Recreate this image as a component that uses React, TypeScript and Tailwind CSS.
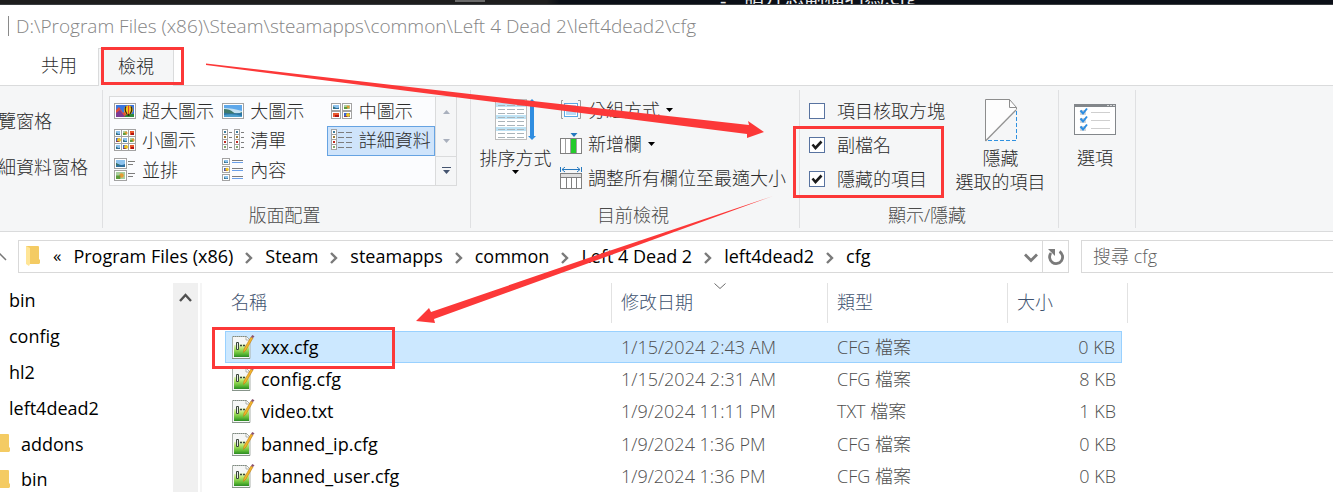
import React, { useState } from 'react';

const Frame = ({ x, y, w, h, tone = 'sky' }: { x: number; y: number; w: number; h: number; tone?: 'sky' | 'red' | 'leaf' | 'balloon' }) => (
  <g>
    <rect x={x + 0.5} y={y + 0.5} width={w - 1} height={h - 1} fill="#fff" stroke="#a3a3a3" />
    {tone === 'sky' && (
      <g>
        <rect x={x + 2} y={y + 2} width={w - 4} height={h - 4} fill="#8ec3ee" />
        <path d={`M${x + 2} ${y + h * 0.45}q${(w - 4) / 2} ${h * 0.3} ${w - 4} ${h * 0.1}V${y + h - 2}H${x + 2}z`} fill="#2f6f9e" />
        <path d={`M${x + 2} ${y + h * 0.45}l${(w - 4) / 2} ${h * 0.2}H${x + 2}z`} fill="#3b7466" />
      </g>
    )}
    {tone === 'red' && (
      <g>
        <rect x={x + 2} y={y + 2} width={w - 4} height={h - 4} fill="#e9572c" />
        <rect x={x + w / 2 - 1} y={y + h / 2} width={w / 2 - 1} height={h / 2 - 2} fill="#b31412" />
      </g>
    )}
    {tone === 'leaf' && (
      <g>
        <rect x={x + 2} y={y + 2} width={w - 4} height={h - 4} fill="#a9cfa0" />
        <circle cx={x + w / 2 + 1} cy={y + h / 2} r={Math.max(1, h / 5)} fill="#e79b35" />
        <rect x={x + 2} y={y + h / 2} width={w / 3} height={h / 2 - 2} fill="#5d9b3b" />
      </g>
    )}
    {tone === 'balloon' && (
      <g>
        <rect x={x + 2} y={y + 2} width={w - 4} height={h - 4} fill="#3a62d0" />
        <circle cx={x + w / 2 + 1} cy={y + h / 2} r={Math.max(1, h / 4)} fill="#f3c421" />
        <rect x={x + 2} y={y + h / 2 + 1} width={w / 3} height={h / 2 - 3} fill="#8b3a50" />
      </g>
    )}
  </g>
);

const IconBox = ({ children }: { children: React.ReactNode }) => (
  <svg width="22" height="24" viewBox="0 0 22 24" className="shrink-0" aria-hidden="true">{children}</svg>
);

const ExtraLarge = () => (
  <IconBox>
    <rect x="0.5" y="4.5" width="21" height="15" fill="#fff" stroke="#a3a3a3" />
    <rect x="2" y="6" width="18" height="12" fill="#3b76e0" />
    <path d="M2 11l3-3 4 6 3-3 3 7H2z" fill="#e2503a" />
    <path d="M2 14l4-3 5 7H2z" fill="#7c3b94" />
    <path d="M10 18l3-3h7v3z" fill="#2e8b3d" />
    <circle cx="14.5" cy="11" r="4.5" fill="#f6c21c" />
    <path d="M12 7.500q-2 3.500 1 7.500M17 7.500q2 3.500-1 7.500" fill="none" stroke="#33220f" strokeWidth="1.200" />
    <path d="M14.500 6.500v9" stroke="#e8452c" />
    <rect x="13.500" y="15" width="2" height="2" fill="#402a10" />
  </IconBox>
);
const Large = () => (
  <IconBox>
    <rect x="0.5" y="4.5" width="21" height="15" fill="#fff" stroke="#a3a3a3" />
    <rect x="2" y="6" width="18" height="12" fill="#5fa8ea" />
    <path d="M2 9q8 0 18 3v2H2z" fill="#c4e2f2" />
    <path d="M2 10q6 0 9 3t9 0v2H2z" fill="#3f7a6c" />
    <path d="M2 14q9 1 18 0v4H2z" fill="#2c75a8" />
    <path d="M2 16q9-2 18 1v1H2z" fill="#4da0cc" />
  </IconBox>
);
const Medium = () => (
  <IconBox>
    <Frame x={0} y={4} w={10} h={8} />
    <Frame x={11} y={4} w={10} h={8} tone="leaf" />
    <Frame x={0} y={12} w={10} h={8} tone="red" />
    <Frame x={11} y={12} w={10} h={8} tone="balloon" />
  </IconBox>
);
const Small = () => (
  <IconBox>
    {([['sky', 'leaf', 'red'], ['balloon', 'sky', 'leaf'], ['sky', 'balloon', 'red']] as const).map((r, j) =>
      r.map((t, i) => <Frame key={`${i}${j}`} x={i * 7} y={1 + j * 7} w={8} h={8} tone={t} />),
    )}
  </IconBox>
);
const dotColours = ['#3f7d9c', '#9a7a35', '#c02a22', '#7fa76b'];
const ListIcon = () => (
  <IconBox>
    {[0, 12].map((x) => (
      <g key={x}>
        <rect x={x + 0.5} y="1.5" width="5" height="20" fill="#fff" stroke="#a3a3a3" />
        {dotColours.map((c, i) => (
          <g key={c}>
            <rect x={x + 2} y={3 + i * 5} width="2" height="2" fill={c} />
            <path d={`M${x} ${6.5 + i * 5}h6`} stroke="#a3a3a3" />
            <path d={`M${x + 7} ${4.5 + i * 5}h3`} stroke="#7d7d7d" />
          </g>
        ))}
      </g>
    ))}
  </IconBox>
);
const Details = () => (
  <IconBox>
    <rect x="0.5" y="1.5" width="5" height="20" fill="#fff" stroke="#a3a3a3" />
    {dotColours.map((c, i) => (
      <g key={c}>
        <rect x="2" y={3 + i * 5} width="2" height="2" fill={c} />
        <path d={`M0 ${6.5 + i * 5}h6`} stroke="#a3a3a3" />
        <path d={`M7 ${4.5 + i * 5}h6m2 0h6`} stroke="#7d7d7d" />
      </g>
    ))}
  </IconBox>
);
const Tiles = () => (
  <IconBox>
    <Frame x={0} y={0} w={13} h={11} />
    <Frame x={0} y={12} w={13} h={11} tone="leaf" />
    <path d="M14 3.500h7M14 6.500h5M14 15.500h7M14 18.500h5" stroke="#7d7d7d" />
  </IconBox>
);
const Content = () => (
  <IconBox>
    {[0, 8, 16].map((y, i) => (
      <g key={y}>
        <Frame x={0} y={y} w={8} h={7} tone={i === 1 ? 'balloon' : 'sky'} />
        <path d={`M10 ${y + 2.5}h11`} stroke="#7d7d7d" />
        <path d={`M10 ${y + 4.5}h11`} stroke="#6aa0ea" />
      </g>
    ))}
  </IconBox>
);

const layouts = [
  { label: '超大圖示', Icon: ExtraLarge },
  { label: '大圖示', Icon: Large },
  { label: '中圖示', Icon: Medium },
  { label: '小圖示', Icon: Small },
  { label: '清單', Icon: ListIcon },
  { label: '詳細資料', Icon: Details },
  { label: '並排', Icon: Tiles },
  { label: '內容', Icon: Content },
];

const Caret = () => (
  <svg width="7" height="4" viewBox="0 0 7 4" className="shrink-0" aria-hidden="true"><path d="M0 0h7L3.500 4z" fill="#000" /></svg>
);

const SortIcon = () => (
  <svg width="42" height="44" viewBox="0 0 42 44" aria-hidden="true">
    <rect x="0.500" y="1.500" width="31" height="40" fill="#fff" stroke="#bcbcbc" />
    {[0, 1, 2, 3, 4, 5, 6, 7, 8, 9].map((i) => (
      <g key={i}>
        {i % 3 === 1 && <rect x="1" y={1 + i * 4} width="30" height="4" fill="#bfe3f5" />}
        <path d={`M3 ${3.5 + i * 4}h7m2 0h8m2 0h7`} stroke="#aab4ba" />
      </g>
    ))}
    <path d="M37 1l4 4h-2v33h2l-4 4-4-4h2V5h-2z" fill="#2f8de0" />
  </svg>
);
const GroupIcon = () => (
  <svg width="22" height="22" viewBox="0 0 22 22" aria-hidden="true">
    <path d="M3 1.500H1.500v18H3M18 1.500h2.500v18H18" fill="none" stroke="#9b9b9b" />
    <rect x="4.500" y="4.500" width="13" height="13" fill="#fff" stroke="#5aa7e4" />
    <rect x="6" y="6" width="10" height="10" fill="#b8dcf8" />
  </svg>
);
const AddColumnIcon = () => (
  <svg width="22" height="22" viewBox="0 0 22 22" aria-hidden="true">
    <path d="M10.500 0h7L14 4z" fill="#2578be" />
    <rect x="0.500" y="5.500" width="21" height="15" fill="#fff" stroke="#808080" />
    <path d="M5.500 6v14M10.500 6v14M16.500 6v14" stroke="#a0a0a0" />
    <rect x="11" y="6" width="5" height="14" fill="#24cb2b" />
  </svg>
);
const FitIcon = () => (
  <svg width="22" height="22" viewBox="0 0 22 22" aria-hidden="true">
    <path d="M.500 0v5M21.500 0v5M2 2.500h18M5 0L2 2.500 5 5M17 0l3 2.500L17 5" fill="none" stroke="#2578be" />
    <rect x="0.500" y="6.500" width="21" height="15" fill="#fff" stroke="#808080" />
    <path d="M1 8.500h20" stroke="#dedede" strokeWidth="3" />
    <path d="M1 10.500h20M6.500 11v10M11.500 11v10M16.500 11v10" stroke="#808080" />
  </svg>
);
const HideIcon = () => (
  <svg width="32" height="43" viewBox="0 0 32 43" aria-hidden="true">
    <path d="M.500.500h24l7 8v3L.500 42z" fill="#fdfdfd" />
    <path d="M.500 42V.500h24l7 8v2M24.500.500v8h7" fill="none" stroke="#8d8d8d" />
    <path d="M31 11L.500 42" stroke="#929292" strokeWidth="1.300" />
    <path d="M31.500 12v30M3 41.500h29" stroke="#2f91e0" strokeDasharray="4 2" />
  </svg>
);
const OptionsIcon = () => (
  <svg width="42" height="32" viewBox="0 0 42 32" aria-hidden="true">
    <rect x="0.500" y="0.500" width="41" height="30" fill="#fff" stroke="#83878b" />
    <rect width="42" height="3" fill="#83878b" />
    <path d="M33 1.500h2m1 0h2m1 0h2" stroke="#d5d7d8" />
    {[5, 13, 21].map((y) => (
      <g key={y}>
        <rect x="6" y={y + 1} width="6" height="5" fill="#d4d7da" />
        <path d={`M6.500 ${y + 1.5}l2.500 3 4-5`} fill="none" stroke="#2d8ee2" strokeWidth="2" />
        <path d={`M17 ${y + 3.5}h19`} stroke="#cfcfcf" />
      </g>
    ))}
  </svg>
);
const FolderIcon = ({ className = '' }: { className?: string }) => (
  <svg width="16" height="22" viewBox="0 0 16 22" className={`shrink-0 ${className}`} aria-hidden="true">
    <path d="M1 1h12q1 0 1 1v12l1 1v3l-1 1H1z" fill="#f4cb63" />
    <path d="M1 1l4 2v16l-1 2-3-2z" fill="#ffe596" />
  </svg>
);
const FileIcon = () => (
  <svg width="24" height="26" viewBox="0 0 24 26" className="shrink-0" aria-hidden="true">
    <defs>
      <linearGradient id="grass" x1="0" y1="0" x2="0" y2="1">
        <stop offset="0" stopColor="#eef8dc" />
        <stop offset="0.35" stopColor="#b4e668" />
        <stop offset="0.75" stopColor="#5fbb35" />
        <stop offset="1" stopColor="#2b8a24" />
      </linearGradient>
    </defs>
    <path d="M1.500 2.500H15l4 4v18H1.500z" fill="#f6f7f6" stroke="#a9b0aa" />
    <path d="M2 2.500h13" stroke="#7f8a80" strokeDasharray="1 1" />
    <path d="M15 2l4 4h-4z" fill="#fff" stroke="#8f9790" strokeWidth=".7" />
    <path d="M3 11q8-2 15 0v12H3z" fill="url(#grass)" />
    <path d="M1 24.500h18" stroke="#87948a" />
    <path d="M5.500 8.500h2v7h-2z" fill="#e8efe4" stroke="#3a463a" />
    <path d="M9 11.500h2m1 0h2" stroke="#3a463a" strokeWidth="1.500" />
    <path d="M20 3l2 1-7 12-2.500 2.500.500-3.500z" fill="#f4b62a" stroke="#bd7a16" strokeWidth=".6" />
    <path d="M20 3l1.200-2 2.300 1.200L22 4z" fill="#8b5370" />
  </svg>
);

const crumbs = ['Program Files (x86)', 'Steam', 'steamapps', 'common', 'Left 4 Dead 2', 'left4dead2', 'cfg'];
const files = [
  ['xxx.cfg', '1/15/2024 2:43 AM', 'CFG 檔案', '0 KB'],
  ['config.cfg', '1/15/2024 2:31 AM', 'CFG 檔案', '8 KB'],
  ['video.txt', '1/9/2024 11:11 PM', 'TXT 檔案', '1 KB'],
  ['banned_ip.cfg', '1/9/2024 1:36 PM', 'CFG 檔案', '0 KB'],
  ['banned_user.cfg', '1/9/2024 1:36 PM', 'CFG 檔案', '0 KB'],
];
const folders = ['bin', 'config', 'hl2', 'left4dead2'];

const Group = ({ label, className, children }: { label?: string; className: string; children: React.ReactNode }) => (
  <section className={`flex shrink-0 flex-col border-r border-[#dfe0e2] ${className}`}>
    <div className="flex h-28 items-start">{children}</div>
    {label && <h2 className="pt-px pr-1 text-center leading-6 text-[#4a4a4a]">{label}</h2>}
  </section>
);

const Check = ({ label, initial }: { label: string; initial: boolean }) => {
  const [on, setOn] = useState(initial);
  return (
    <label className="flex h-[34px] items-center gap-3">
      <span className="relative flex">
        <input type="checkbox" checked={on} onChange={() => setOn(!on)} className="size-4 appearance-none border border-[#5873a0] bg-white" />
        {on && (
          <svg viewBox="0 0 16 16" className="pointer-events-none absolute inset-0 size-4" aria-hidden="true">
            <path d="M3.500 7.500l3 3.500 6-6.500" fill="none" stroke="#1b1b1b" strokeWidth="2.600" />
          </svg>
        )}
      </span>
      {label}
    </label>
  );
};

const Chevron = () => (
  <svg width="8" height="12" viewBox="0 0 8 12" className="mt-1 shrink-0" aria-hidden="true"><path d="M1 1l5 5-5 5" fill="none" stroke="#7a7a7a" strokeWidth="2.400" /></svg>
);

export default function App() {
  const [layout, setLayout] = useState('詳細資料');
  return (
    <div className="relative min-h-screen overflow-hidden bg-white font-['Open_Sans','Noto_Sans_CJK_TC',sans-serif] text-[18px] font-light whitespace-nowrap text-[#2b2b2b]">
      <div className="flex h-[5px] items-end overflow-hidden border-b border-[#3a3d40] bg-gradient-to-r from-[#1e1e1e] from-[41%] to-[#0b0f17] to-[42%] pl-[455px] text-[20px] text-[#e8eaec]">
        <span className="mb-[2px] h-[2px] w-[30px] bg-[#6a6a6a]" />
        <span className="mb-[-5px] ml-[235px] leading-4 font-normal">-</span>
        <span className="mb-[-6px] ml-[18px] leading-6 font-normal">請升您副檔名為.cfg</span>
      </div>
      <header className="flex h-[43px] items-center pb-px pl-2 text-[19px] text-[#858585]">
        <span className="mr-[7px] h-5 w-px bg-[#8a8a8a]" />
        <h1>D:\Program Files (x86)\Steam\steamapps\common\Left 4 Dead 2\left4dead2\cfg</h1>
      </header>
      <nav className="flex h-[37px] pl-5">
        <button className="w-[78px] pb-[2px] text-center">共用</button>
        <div className="relative z-10 mb-[-1px] flex w-[76px] border-x border-t border-[#dadbdc] bg-[#f5f6f7]">
          <button className="w-full pb-[3px]">檢視</button>
          <span className="pointer-events-none absolute top-[-2px] left-[2px] h-[38px] w-[83px] border-3 border-[#fc3838]" />
        </div>
      </nav>

      <div className="flex h-[147px] border-y border-[#dadbdc] bg-[#f5f6f7] pt-1 pb-[3px]">
        <Group className="w-[103px]">
          <div className="ml-[-2px] flex flex-col items-start pt-4">
            <button className="mb-4 h-[30px]">覽窗格</button>
            <button className="h-[30px]">細資料窗格</button>
          </div>
        </Group>
        <Group label="版面配置" className="w-[368px]">
          <div className="mt-[6px] ml-[6px] flex h-[90px] border border-[#dadbdc] bg-[#fbfcfe]">
            <div className="grid w-[325px] grid-cols-3 grid-rows-3">
              {layouts.map(({ label, Icon }) => (
                <button
                  key={label}
                  onClick={() => setLayout(label)}
                  className={`flex items-center gap-[6px] border pb-px pl-[3px] text-left leading-6 ${layout === label ? 'border-[#66a3e2] bg-[#cfe4fb]' : 'border-transparent'}`}
                >
                  <Icon />
                  {label}
                </button>
              ))}
            </div>
            <div className="grid w-[21px] grid-rows-3 border-l border-[#dadbdc] bg-[#f5f6f7]">
              <button aria-label="上一列" className="flex items-center justify-center"><svg width="7" height="4" viewBox="0 0 7 4"><path d="M0 4h7L3.500 0z" fill="#a9b0bd" /></svg></button>
              <button aria-label="下一列" className="flex items-center justify-center"><svg width="7" height="4" viewBox="0 0 7 4"><path d="M0 0h7L3.500 4z" fill="#a9b0bd" /></svg></button>
              <button aria-label="其他" className="flex items-center justify-center border-t border-[#dadbdc]"><svg width="9" height="7" viewBox="0 0 9 7"><path d="M0 .500h9" stroke="#44546f" /><path d="M1 3h7L4.500 7z" fill="#44546f" /></svg></button>
            </div>
          </div>
        </Group>
        <Group label="目前檢視" className="w-[329px]">
          <button className="mt-2 ml-2 flex w-[73px] flex-col items-center leading-6">
            <SortIcon />
            <span className="mt-1">排序方式</span>
            <Caret />
          </button>
          <div className="ml-2 flex flex-col items-start pt-[3px]">
            <button className="flex h-[34px] items-center gap-[6px]"><GroupIcon />分組方式<Caret /></button>
            <button className="flex h-[34px] items-center gap-[6px]"><AddColumnIcon />新增欄<Caret /></button>
            <button className="flex h-[34px] items-center gap-[6px]"><FitIcon />調整所有欄位至最適大小</button>
          </div>
        </Group>
        <Group label="顯示/隱藏" className="w-[259px]">
          <div className="relative ml-[9px] flex w-36 flex-col pt-1">
            <Check label="項目核取方塊" initial={false} />
            <Check label="副檔名" initial />
            <Check label="隱藏的項目" initial />
            <span className="pointer-events-none absolute top-9 left-[-16px] h-[72px] w-[151px] border-3 border-[#fc3838]" />
          </div>
          <button className="mt-[9px] flex w-[95px] flex-col items-center leading-6">
            <HideIcon />
            <span className="mt-1">隱藏</span>
            <span>選取的項目</span>
          </button>
        </Group>
        <Group className="w-[77px]">
          <button className="mt-[14px] flex w-full flex-col items-center pr-1 leading-6">
            <OptionsIcon />
            <span className="mt-[10px]">選項</span>
          </button>
        </Group>
      </div>

      <div className="mt-2 flex h-[33px] font-normal">
        <button aria-label="上一層" className="flex w-[18px] shrink-0 items-center"><svg width="7" height="8" viewBox="0 0 7 8"><path d="M-4 7L0 1l6 6" fill="none" stroke="#777" strokeWidth="1.500" /></svg></button>
        <nav className="flex min-w-0 flex-1 items-center border border-[#d9d9d9] pb-[2px] pl-[6px] text-black">
          <FolderIcon />
          <span className="mx-3 text-[17px]">«</span>
          {crumbs.map((c, i) => (
            <React.Fragment key={c}>
              {i > 0 && <span className="mx-3 flex"><Chevron /></span>}
              <a href="#" className="leading-6">{c}</a>
            </React.Fragment>
          ))}
          <button aria-label="先前的位置" className="mt-1 mr-1 ml-auto"><svg width="14" height="10" viewBox="0 0 14 10"><path d="M1 1.500l6 6 6-6" fill="none" stroke="#7a7a7a" strokeWidth="2.800" /></svg></button>
        </nav>
        <button aria-label="重新整理" className="flex w-[26px] shrink-0 items-center justify-center border-y border-r border-[#d9d9d9]">
          <svg width="18" height="18" viewBox="0 0 18 18"><path d="M4 5a6.500 6.500 0 1 0 8.500-1.500" fill="none" stroke="#7a7a7a" strokeWidth="2.800" /><path d="M1 1h7v7z" fill="#7a7a7a" /></svg>
        </button>
        <input aria-label="搜尋" placeholder="搜尋 cfg" className="ml-3 w-[252px] shrink-0 border border-r-0 border-[#d9d9d9] pl-[11px] font-light outline-none placeholder:text-[#5f5f5f]" />
      </div>

      <main className="mt-[10px] flex">
        <aside className="w-[173px] shrink-0 font-normal text-black">
          <ul>
            {folders.map((f) => <li key={f} className="flex h-9 items-center pb-[2px] pl-[9px]">{f}</li>)}
            {['addons', 'bin'].map((f, i) => (
              <li key={f} className={`flex items-center ${i ? 'h-[29px] pt-1' : 'h-9 pb-[2px]'}`}>
                <FolderIcon className="ml-[-5px]" />
                <span className="ml-[10px]">{f}</span>
              </li>
            ))}
          </ul>
        </aside>
        <div className="flex w-[25px] shrink-0 justify-center bg-[#f0f0f0] pt-[10px]">
          <svg width="13" height="10" viewBox="0 0 13 10" aria-hidden="true"><path d="M1 8l5.500-6L12 8" fill="none" stroke="#505050" strokeWidth="2.400" /></svg>
        </div>
        <div className="ml-[2px] w-[25px] shrink-0 border-l-2 border-[#f5f5f5]" />
        <table className="w-[903px] shrink-0 table-fixed border-separate border-spacing-0 text-left">
          <colgroup>
            <col className="w-[387px]" /><col className="w-[216px]" /><col className="w-[180px]" /><col className="w-[114px]" /><col className="w-[6px]" />
          </colgroup>
          <thead className="text-[#3f5370]">
            <tr className="h-12 align-top">
              <th className="p-0 font-light"><div className="h-10 border-r border-[#e2e2e2] pl-[6px] leading-[38px]">名稱</div></th>
              <th className="relative p-0 font-light">
                <div className="h-10 border-r border-[#e2e2e2] pl-[9px] leading-[38px]">修改日期</div>
                <svg width="12" height="7" viewBox="0 0 12 7" className="absolute inset-x-0 top-0 mx-auto" aria-hidden="true"><path d="M.500.500l5.500 5 5.500-5" fill="none" stroke="#6b6b6b" /></svg>
              </th>
              <th className="p-0 font-light"><div className="h-10 border-r border-[#e2e2e2] pl-[9px] leading-[38px]">類型</div></th>
              <th className="p-0 font-light"><div className="h-10 pl-[9px] leading-[38px]">大小</div></th>
              <th className="p-0"><div className="h-10 border-r border-[#e2e2e2]" /></th>
            </tr>
          </thead>
          <tbody className="text-[#4f4f4f]">
            {files.map(([name, date, type, size], i) => {
              const cell = i === 0 ? 'border-y border-[#99d1ff] bg-[#cce8ff]' : 'border-y border-transparent';
              return (
                <tr key={name} className="h-8 leading-6">
                  <td className={`relative p-0 ${cell} ${i === 0 ? 'border-l' : ''}`}>
                    <div className={`flex items-center gap-[6px] font-normal text-black ${i === 0 ? 'pl-[5px]' : 'pl-[6px]'}`}>
                      <FileIcon />
                      {name}
                    </div>
                    {i === 0 && <span className="pointer-events-none absolute top-[-5px] left-[-14px] z-10 h-[42px] w-[183px] border-3 border-[#fc3838]" />}
                  </td>
                  <td className={`p-0 pl-[9px] ${cell}`}>{date}</td>
                  <td className={`p-0 pl-[9px] ${cell}`}>{type}</td>
                  <td className={`p-0 pr-[6px] text-right ${cell} ${i === 0 ? 'border-r' : ''}`}>{size}</td>
                </tr>
              );
            })}
          </tbody>
        </table>
      </main>

      <svg width="1333" height="492" viewBox="0 0 1333 492" className="pointer-events-none absolute top-0 left-0 z-20" aria-hidden="true">
        <path d="M206 63.500L470 94l279 31-1-4 16 11-17 6v-4L470 99 206 65z" fill="#fc3838" />
        <path d="M773 196L600 254 431 312l-2-4-13 13 19 2-1-4 166-60z" fill="#fc3838" />
      </svg>
    </div>
  );
}
